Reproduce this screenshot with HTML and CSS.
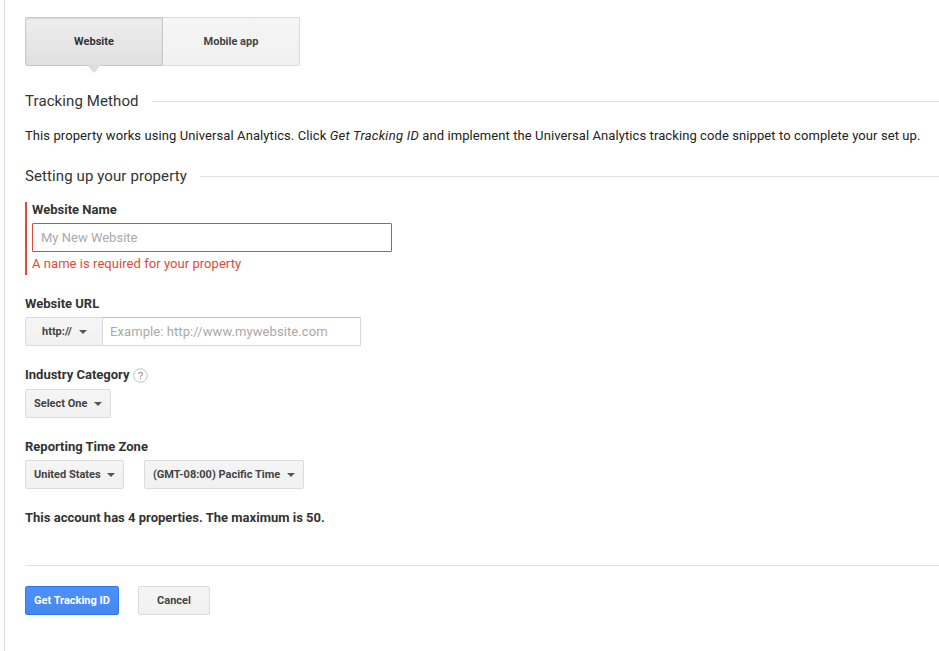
FILE: index.html
```html
<!DOCTYPE html>
<html lang="en">
<head>
<meta charset="utf-8">
<title>New Property</title>
<link rel="stylesheet" href="styles.css">
</head>
<body>
<main class="panel">
  <div class="tabs">
    <button class="tab tab-active" type="button"><span>Website</span></button>
    <button class="tab" type="button"><span>Mobile app</span></button>
  </div>

  <h2 class="section-title"><span>Tracking Method</span></h2>
  <p class="intro"><span>This property works using Universal Analytics. Click <em>Get Tracking ID</em> and implement the Universal Analytics tracking code snippet to complete your set up.</span></p>
  <h2 class="section-title second"><span>Setting up your property</span></h2>

  <form class="form">
    <div class="field field-error">
      <label class="label" for="name"><span>Website Name</span></label>
      <input class="input input-name" id="name" type="text" placeholder="My New Website">
      <div class="error"><span>A name is required for your property</span></div>
    </div>

    <div class="field field-url">
      <label class="label" for="url"><span>Website URL</span></label>
      <div class="row">
        <button class="btn btn-scheme" type="button"><span>http://</span><i class="caret"></i></button>
        <input class="input input-url" id="url" type="text" placeholder="Example: http://www.mywebsite.com">
      </div>
    </div>

    <div class="field field-industry">
      <div class="label"><span>Industry Category</span>
        <svg class="help" viewBox="0 0 15 15" width="15" height="15"><circle cx="7.5" cy="7.5" r="6.8" fill="#fff" stroke="#c4c4c4"/><path d="M5.6 6.1C5.6 3.7 9.5 3.7 9.5 6C9.5 7.4 7.5 7.4 7.5 9M7.5 10.1V11.3" fill="none" stroke="#999" stroke-width="1.1"/></svg>
      </div>
      <button class="btn btn-industry" type="button"><span>Select One</span><i class="caret"></i></button>
    </div>

    <div class="field field-zone">
      <div class="label"><span>Reporting Time Zone</span></div>
      <div class="row zones">
        <button class="btn btn-country" type="button"><span>United States</span><i class="caret"></i></button>
        <button class="btn btn-gmt" type="button"><span>(GMT-08:00) Pacific Time</span><i class="caret"></i></button>
      </div>
    </div>

    <p class="quota"><span>This account has 4 properties. The maximum is 50.</span></p>

    <div class="actions">
      <button class="btn btn-primary" type="button"><span>Get Tracking ID</span></button>
      <button class="btn btn-cancel" type="button"><span>Cancel</span></button>
    </div>
  </form>
</main>
</body>
</html>
```
FILE: styles.css
```css
* { box-sizing: border-box; }

body {
  margin: 0;
  background: #fff;
  color: #222;
  font: 13px/20px Roboto, Arial, sans-serif;
  overflow: hidden;
}

button, input { margin: 0; font-family: inherit; }

span { white-space: nowrap; }

.panel {
  height: 651px;
  margin-left: 4px;
  padding: 17px 0 0 20px;
  border-left: 1px solid #d9d9d9;
}

.tabs { display: flex; height: 49px; }

.tab {
  width: 137px;
  padding: 0;
  border: 1px solid #dcdcdc;
  border-left: 0;
  border-radius: 0 2px 2px 0;
  background: linear-gradient(#f5f5f5, #f1f1f1);
  color: #444;
  font-size: 11px;
  font-weight: 700;
}

.tab-active {
  position: relative;
  width: 138px;
  border: 1px solid #c8c8c8;
  border-radius: 2px 0 0 2px;
  background: linear-gradient(#eee, #e0e0e0);
  box-shadow: inset 0 1px 2px rgba(0, 0, 0, .1);
  color: #333;
}

.tab-active::after {
  content: "";
  position: absolute;
  top: 47px;
  left: 61px;
  border: 7px solid transparent;
  border-top: 8px solid #dcdcdc;
  border-bottom: 0;
}

.section-title {
  display: flex;
  align-items: center;
  gap: 13px;
  height: 20px;
  margin: 25px 0 0;
  color: #333;
  font-size: 15px;
  font-weight: 400;
  letter-spacing: .1px;
}

.section-title::after {
  content: "";
  flex: 1;
  height: 1px;
  background: #e0e0e0;
}

.section-title.second { margin-top: 20px; }

.intro { height: 20px; margin: 15px 0 0; letter-spacing: .09px; }
.intro em { letter-spacing: .27px; }

.field { display: flex; flex-direction: column; align-items: flex-start; }

.label {
  display: flex;
  align-items: center;
  gap: 4px;
  height: 20px;
  color: #333;
  font-weight: 700;
}

.field-error {
  height: 73px;
  margin-top: 16px;
  padding-left: 5px;
  border-left: 2px solid #dd4b39;
}

.field-error .label { height: 21px; padding-bottom: 6px; }

.input {
  height: 29px;
  padding: 0 8px;
  border: 1px solid #d9d9d9;
  border-top-color: #c0c0c0;
  border-radius: 1px;
  background: #fff;
  color: #333;
  font-size: 13px;
  outline: 0;
}

.input::placeholder { color: #a9a9a9; opacity: 1; }

.input-name { width: 360px; border-color: #dd4b39; }

.error { height: 20px; margin-top: 2px; color: #dd4b39; letter-spacing: .05px; }

.row { display: flex; }

.field-url { margin-top: 19px; }
.field-url .row { margin-top: 3px; }
.input-url {
  width: 259px;
  margin-left: -1px;
  padding-left: 7px;
  border-radius: 0;
  letter-spacing: .08px;
}

.btn {
  display: flex;
  align-items: center;
  justify-content: space-between;
  height: 29px;
  padding: 0 8px;
  border: 1px solid #dcdcdc;
  border-radius: 2px;
  background: linear-gradient(#f5f5f5, #f1f1f1);
  color: #444;
  font-size: 11px;
  font-weight: 700;
}

.caret {
  border: 4px solid transparent;
  border-top-color: #555;
  border-bottom: 0;
}

.btn-scheme { width: 78px; padding: 0 15px 0 16px; border-radius: 2px 0 0 2px; }

.field-industry { margin-top: 19px; }
.btn-industry { width: 86px; margin-top: 4px; }

.field-zone { margin-top: 19px; }
.zones { gap: 20px; margin-top: 3px; }
.btn-country { width: 99px; }
.btn-gmt { width: 160px; }

.quota { height: 20px; margin: 19px 0 0; color: #333; font-weight: 700; letter-spacing: .01px; }

.actions {
  display: flex;
  gap: 19px;
  margin-top: 37px;
  padding-top: 20px;
  border-top: 1px solid #e0e0e0;
}

.btn-primary {
  width: 94px;
  justify-content: center;
  border-color: #3079ed;
  background: linear-gradient(#4d90fe, #4787ed);
  color: #fff;
}

.btn-cancel { width: 72px; justify-content: center; }
```
